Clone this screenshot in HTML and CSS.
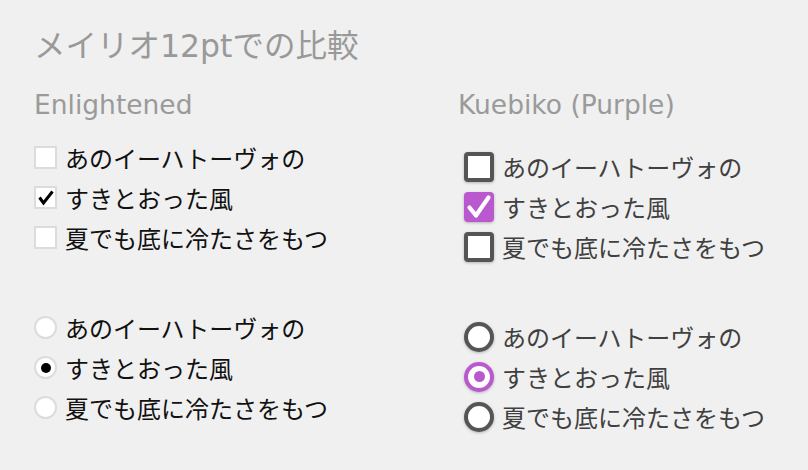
FILE: index.html
```html
<!DOCTYPE html>
<html lang="ja">
<head>
<meta charset="utf-8">
<link rel="stylesheet" href="styles.css">
</head>
<body>
<div class="page">
  <h1 class="title">メイリオ12ptでの比較</h1>
  <div class="cols">
    <section class="col col-en">
      <h2 class="heading">Enlightened</h2>
      <div class="group">
        <div class="row"><span class="cb"></span><span class="lbl">あのイーハトーヴォの</span></div>
        <div class="row"><span class="cb"><svg viewBox="0 0 19 19" width="19" height="19"><path d="M3.5 9.5 L7.5 15 L16.5 3.5" fill="none" stroke="#000" stroke-width="3" stroke-linejoin="miter"/></svg></span><span class="lbl">すきとおった風</span></div>
        <div class="row"><span class="cb"></span><span class="lbl">夏でも底に冷たさをもつ</span></div>
      </div>
      <div class="group group-radio">
        <div class="row"><span class="rb"></span><span class="lbl">あのイーハトーヴォの</span></div>
        <div class="row"><span class="rb on"></span><span class="lbl">すきとおった風</span></div>
        <div class="row"><span class="rb"></span><span class="lbl">夏でも底に冷たさをもつ</span></div>
      </div>
    </section>
    <section class="col col-ku">
      <h2 class="heading">Kuebiko (Purple)</h2>
      <div class="group">
        <div class="row"><span class="cb"></span><span class="lbl">あのイーハトーヴォの</span></div>
        <div class="row"><span class="cb on"><svg viewBox="0 0 30 30" width="30" height="30"><path d="M5.5 15.5 L12 23.5 L24.5 5.5" fill="none" stroke="#fff" stroke-width="4.2" stroke-linecap="round" stroke-linejoin="round"/></svg></span><span class="lbl">すきとおった風</span></div>
        <div class="row"><span class="cb"></span><span class="lbl">夏でも底に冷たさをもつ</span></div>
      </div>
      <div class="group group-radio">
        <div class="row"><span class="rb"></span><span class="lbl">あのイーハトーヴォの</span></div>
        <div class="row"><span class="rb on"></span><span class="lbl">すきとおった風</span></div>
        <div class="row"><span class="rb"></span><span class="lbl">夏でも底に冷たさをもつ</span></div>
      </div>
    </section>
  </div>
</div>
</body>
</html>
```

FILE: styles.css
```css
html, body {
  margin: 0;
  padding: 0;
  background: #f0f0f0;
}
body {
  font-family: "DejaVu Sans", "Noto Sans CJK JP", sans-serif;
  width: 808px;
  height: 470px;
  overflow: hidden;
}
.page {
  padding: 26px 0 0 34px;
}
.title {
  margin: 0;
  font-family: "DejaVu Sans", "Noto Sans CJK JP", sans-serif;
  font-weight: 400;
  font-size: 31.5px;
  line-height: 40px;
  color: #999;
}
.cols {
  display: grid;
  grid-template-columns: 424px 1fr;
  margin-top: 23px;
}
.heading {
  margin: 0;
  font-weight: 400;
  font-size: 26.5px;
  line-height: 32px;
  color: #9a9a9a;
}
.group {
  display: flex;
  flex-direction: column;
}
.col-en .group { margin-top: 16.5px; }
.col-ku .group { margin-top: 25.5px; padding-left: 6px; }
.col .group-radio { margin-top: 50px; }
.row {
  display: flex;
  align-items: center;
  height: 40px;
  gap: 8px;
}
.lbl {
  font-family: "Noto Sans CJK JP", sans-serif;
  font-size: 24px;
  line-height: 30px;
}
.col-en .lbl { color: #111; }
.col-ku .lbl { color: #404040; }

.cb, .rb {
  flex: none;
  box-sizing: border-box;
  display: flex;
  align-items: center;
  justify-content: center;
  background: #fff;
}
.cb svg { flex: none; }
.col-en .cb, .col-en .rb {
  width: 23px;
  height: 23px;
  border: 2px solid #dcdcdc;
}
.col-en .rb { border-radius: 50%; }
.col-en .rb.on::after {
  content: "";
  width: 10px;
  height: 10px;
  border-radius: 50%;
  background: #000;
}
.col-ku .cb, .col-ku .rb {
  width: 30px;
  height: 30px;
  border: 4px solid #555;
  border-radius: 4px;
  box-shadow: 0 1px 3px rgba(0,0,0,0.25);
}
.col-ku .cb.on {
  background: #ba58cf;
  border: 0;
}
.col-ku .rb { border-radius: 50%; }
.col-ku .rb.on { border-color: #ba58cf; }
.col-ku .rb.on::after {
  content: "";
  width: 11px;
  height: 11px;
  border-radius: 50%;
  background: #ba58cf;
}
```
